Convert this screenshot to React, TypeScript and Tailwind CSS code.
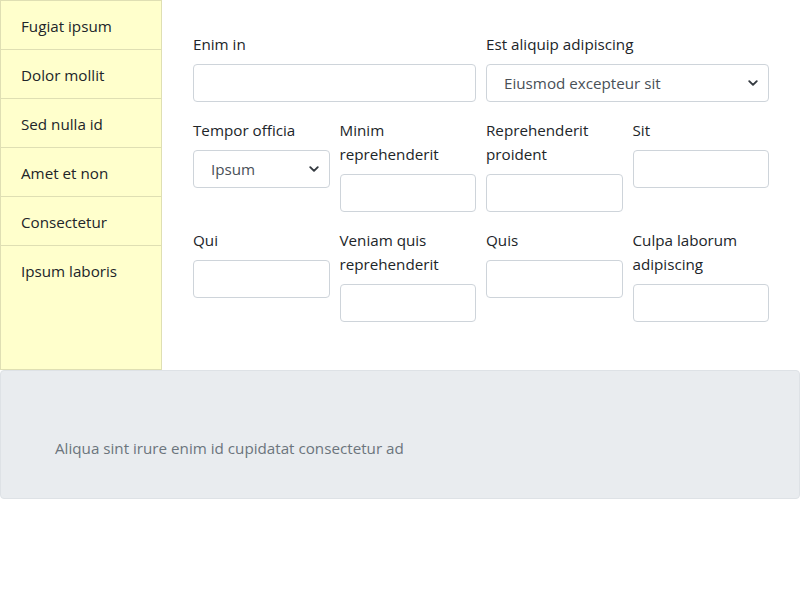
import React from "react";

const navItems = [
  "Fugiat ipsum",
  "Dolor mollit",
  "Sed nulla id",
  "Amet et non",
  "Consectetur",
  "Ipsum laboris",
];

function Chevron() {
  return (
    <svg
      width="10"
      height="10"
      viewBox="0 0 16 16"
      className="pointer-events-none absolute right-[11px] top-1/2 -translate-y-1/2 text-[#343a40]"
    >
      <path
        d="M2 5l6 6 6-6"
        fill="none"
        stroke="currentColor"
        strokeWidth="3"
        strokeLinecap="round"
        strokeLinejoin="round"
      />
    </svg>
  );
}

function Field({ label }: { label: string }) {
  return (
    <div className="flex flex-col">
      <label className="mb-2 leading-6">{label}</label>
      <input className="h-[38px] w-full rounded border border-[#ced4da] bg-white px-3 outline-none" />
    </div>
  );
}

function SelectField({ label, value }: { label: string; value: string }) {
  return (
    <div className="flex flex-col">
      <label className="mb-2 leading-6">{label}</label>
      <div className="relative">
        <select
          defaultValue={value}
          className="h-[38px] w-full appearance-none rounded border border-[#ced4da] bg-white pl-[17px] pr-8 pt-px text-[#495057] outline-none"
        >
          <option>{value}</option>
        </select>
        <Chevron />
      </div>
    </div>
  );
}

export default function App() {
  return (
    <div
      className="min-h-[600px] bg-white text-[15.2px] text-[#212529]"
      style={{ fontFamily: '"Segoe UI", "Open Sans", "Noto Sans", sans-serif' }}
    >
      <div className="flex">
        <div className="flex w-[162px] shrink-0 flex-col border border-[#dfdfb3] bg-[#ffffcc]">
          {navItems.map((item, i) => (
            <div
              key={item}
              className={
                "h-[49px] px-5 pt-[13px] leading-6 " +
                (i < navItems.length - 1 ? "border-b border-[#dfdfb3]" : "")
              }
            >
              {item}
            </div>
          ))}
        </div>

        <div className="flex-1 px-[31px] pb-12 pt-8">
          <div className="mb-4 grid grid-cols-2 gap-x-[10px]">
            <Field label="Enim in" />
            <SelectField label="Est aliquip adipiscing" value="Eiusmod excepteur sit" />
          </div>
          <div className="mb-4 grid grid-cols-4 gap-x-[10px]">
            <SelectField label="Tempor officia" value="Ipsum" />
            <Field label="Minim reprehenderit" />
            <Field label="Reprehenderit proident" />
            <Field label="Sit" />
          </div>
          <div className="grid grid-cols-4 gap-x-[10px]">
            <Field label="Qui" />
            <Field label="Veniam quis reprehenderit" />
            <Field label="Quis" />
            <Field label="Culpa laborum adipiscing" />
          </div>
        </div>
      </div>

      <div className="h-[129px] rounded border border-[#dee2e6] bg-[#e9ecef] pl-[54px] pt-16">
        <p className="pt-px leading-6 text-[#6c757d]">
          Aliqua sint irure enim id cupidatat consectetur ad
        </p>
      </div>
    </div>
  );
}
